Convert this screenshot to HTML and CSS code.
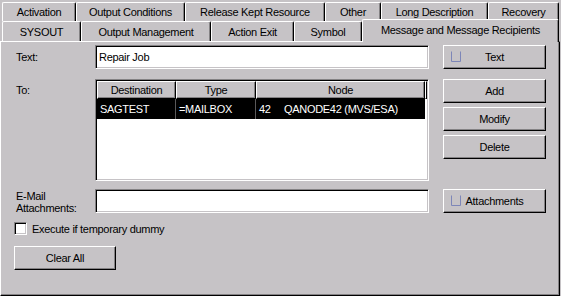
FILE: index.html
```html
<!DOCTYPE html>
<html lang="en">
<head>
  <meta charset="UTF-8">
  <title>Message and Message Recipients</title>
  <link rel="stylesheet" href="styles.css">
</head>
<body>
  <div class="tabs">
    <div class="tab-row">
      <div class="tab t-activation">Activation</div>
      <div class="tab t-outcond">Output Conditions</div>
      <div class="tab t-release">Release Kept Resource</div>
      <div class="tab t-other">Other</div>
      <div class="tab t-longdesc">Long Description</div>
      <div class="tab t-recovery">Recovery</div>
    </div>
    <div class="tab-row front">
      <div class="tab t-sysout">SYSOUT</div>
      <div class="tab t-outmgmt">Output Management</div>
      <div class="tab t-action">Action Exit</div>
      <div class="tab t-symbol">Symbol</div>
      <div class="tab active t-message">Message and Message Recipients</div>
    </div>
  </div>

  <div class="panel">
    <div class="row row-text">
      <div class="label">Text:</div>
      <div class="field">Repair Job</div>
      <button class="btn btn-icon side">
        <svg class="mini-box" width="12" height="12" viewBox="0 0 12 12"><path d="M1.5 0.5 V10.5 H10.5 V0.5" fill="none" stroke="#7d86b8"/></svg>
        <span>Text</span>
      </button>
    </div>

    <div class="row row-to">
      <div class="label label-to">To:</div>
      <div class="list">
        <div class="list-head">
          <div class="hcell c-dest">Destination</div>
          <div class="hcell c-type">Type</div>
          <div class="hcell c-node">Node</div>
          <div class="hcell c-fill"></div>
        </div>
        <div class="list-row selected">
          <div class="cell c-dest">SAGTEST</div>
          <div class="cell c-type">=MAILBOX</div>
          <div class="cell c-node"><span class="node-no">42</span>QANODE42 (MVS/ESA)</div>
        </div>
      </div>
      <div class="stack side">
        <button class="btn">Add</button>
        <button class="btn">Modify</button>
        <button class="btn">Delete</button>
      </div>
    </div>

    <div class="row row-mail">
      <div class="label label-mail">E-Mail<br>Attachments:</div>
      <div class="field"></div>
      <button class="btn btn-icon side">
        <svg class="mini-box" width="12" height="12" viewBox="0 0 12 12"><path d="M1.5 0.5 V10.5 H10.5 V0.5" fill="none" stroke="#7d86b8"/></svg>
        <span>Attachments</span>
      </button>
    </div>

    <div class="row check-row">
      <div class="checkbox"></div>
      <span class="check-label">Execute if temporary dummy</span>
    </div>

    <button class="btn btn-clear">Clear All</button>
  </div>
</body>
</html>
```

FILE: styles.css
```css
* {
  box-sizing: border-box;
}

body {
  margin: 0;
  width: 561px;
  height: 296px;
  overflow: hidden;
  background: #c6c3c6;
  color: #000;
  font-family: "Liberation Sans", Arial, sans-serif;
  font-size: 11px;
  letter-spacing: -0.3px;
}

/* tabs */
.tabs {
  padding: 2px 0 0 2px;
}

.tab-row {
  display: flex;
  height: 19px;
}

.tab-row.front {
  height: 20px;
}

.tab {
  height: 100%;
  display: flex;
  align-items: center;
  justify-content: center;
  white-space: nowrap;
  background: #c6c3c6;
  border-top: 1px solid #fff;
  border-left: 1px solid #fff;
  border-right: 1px solid #000;
  border-radius: 2px 2px 0 0;
  box-shadow: inset -1px 0 #848284;
}

.tab.active {
  height: 23px;
  margin-top: -2px;
  padding-bottom: 3px;
  position: relative;
  z-index: 1;
}

.t-activation { width: 74px; }
.t-outcond { width: 109px; }
.t-release { width: 140px; }
.t-other { width: 56px; }
.t-longdesc { width: 107px; }
.t-recovery { width: 71px; }
.t-sysout { width: 79px; }
.t-outmgmt { width: 130px; }
.t-action { width: 83px; }
.t-symbol { width: 68px; }
.t-message { width: 197px; }

/* panel */
.panel {
  width: 560px;
  height: 255px;
  padding: 3px 0 0 13px;
  border: 1px solid;
  border-color: #fff #000 #000 #fff;
  box-shadow: inset -1px -1px #848284;
}

.row {
  display: flex;
  align-items: center;
}

.row-text {
  height: 24px;
}

.label {
  width: 79px;
  margin-left: 2px;
}

.field {
  width: 334px;
  height: 24px;
  display: flex;
  align-items: center;
  padding-left: 3px;
  background: #fff;
  border: 1px solid;
  border-color: #848284 #fff #fff #848284;
  box-shadow: inset 1px 1px #000, inset -1px -1px #c6c3c6;
}

.side {
  margin-left: 14px;
}

.btn {
  width: 103px;
  height: 24px;
  padding: 0;
  font: inherit;
  letter-spacing: inherit;
  color: #000;
  background: #c6c3c6;
  border: 1px solid;
  border-color: #fff #000 #000 #fff;
  box-shadow: inset -1px -1px #848284;
}

.btn-icon {
  display: grid;
  grid-template-columns: 1fr auto 1fr;
  align-items: center;
}

.mini-box {
  justify-self: start;
  margin-left: 6px;
}

/* recipients list */
.row-to {
  align-items: flex-start;
  margin-top: 10px;
}

.label-to {
  padding-top: 5px;
}

.list {
  width: 334px;
  height: 102px;
  padding: 1px;
  background: #fff;
  border: 1px solid;
  border-color: #848284 #fff #fff #848284;
  box-shadow: inset 1px 1px #000, inset -1px -1px #c6c3c6;
}

.list-head {
  display: flex;
  height: 18px;
}

.hcell {
  display: flex;
  align-items: center;
  justify-content: center;
  background: #c6c3c6;
  border: 1px solid;
  border-color: #fff #000 #000 #fff;
  box-shadow: inset -1px -1px #848284;
}

.c-dest { width: 79px; }
.c-type { width: 80px; }
.c-node { width: 169px; }
.c-fill { flex: 1; }

.list-row {
  display: flex;
  height: 20px;
}

.list-row.selected {
  width: 328px;
  background: #000;
  color: #fff;
}

.cell {
  display: flex;
  align-items: center;
  padding-left: 3px;
  border-right: 1px solid #5a595a;
}

.cell.c-node {
  border-right: none;
}

.node-no {
  width: 25px;
}

.stack {
  display: flex;
  flex-direction: column;
  gap: 4px;
}

/* e-mail attachments */
.row-mail {
  align-items: flex-start;
  margin-top: 8px;
}

.label-mail {
  line-height: 12px;
  padding-top: 1px;
}

.check-row {
  margin-top: 8px;
  height: 13px;
}

.checkbox {
  width: 13px;
  height: 13px;
  background: #fff;
  border: 1px solid;
  border-color: #848284 #fff #fff #848284;
  box-shadow: inset 1px 1px #000, inset -1px -1px #c6c3c6;
}

.check-label {
  margin-left: 5px;
}

.btn-clear {
  display: block;
  width: 102px;
  margin-top: 11px;
}
```
